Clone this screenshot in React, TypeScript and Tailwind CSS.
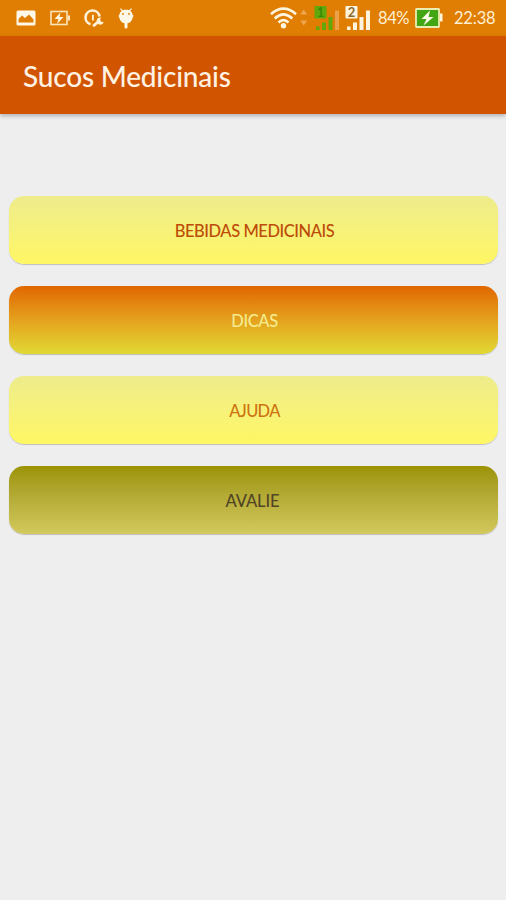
import clsx from "clsx";

const menu = [
  {
    label: "BEBIDAS MEDICINAIS",
    box: "from-[#eeec8c] to-[#fff763]",
    text: "text-[#bd4b08] tracking-[-0.45px]",
  },
  {
    label: "DICAS",
    box: "from-[#e06600] to-[#dfd934]",
    text: "text-[#f4ec8e] tracking-[-0.4px]",
  },
  {
    label: "AJUDA",
    box: "from-[#eeec8c] to-[#fff763]",
    text: "text-[#cd7411] tracking-[-0.7px]",
  },
  {
    label: "AVALIE",
    box: "from-[#9c9300] to-[#d3c95c]",
    text: "-ml-1 text-[#514525] tracking-[-0.1px]",
  },
];

function PictureIcon() {
  return (
    <svg width="20" height="16" viewBox="0 0 20 16">
      <rect x="0.5" y="0.5" width="19" height="15" rx="1.5" fill="#fff8e8" />
      <path d="M2.500 12.500V9l3.500-3.500 3 2.500L13 4.500l4.500 5v3z" fill="#df7e03" />
    </svg>
  );
}

function PowerIcon() {
  return (
    <svg width="20" height="16" viewBox="0 0 20 16">
      <rect x="1" y="1.5" width="16" height="13" fill="none" stroke="#fbe3b8" strokeWidth="1.6" />
      <path d="M17.5 5.5H20v5h-2.5z" fill="#fbe3b8" />
      <path d="M10.5 2.5L4.5 9h4l-1.5 5L13.5 7h-4z" fill="#fff8e8" />
    </svg>
  );
}

function GaugeIcon() {
  return (
    <svg width="20" height="18" viewBox="0 0 20 18">
      <path
        d="M6.500 15.200A7 7 0 1 1 15.500 7.500"
        fill="none"
        stroke="#fff2d8"
        strokeWidth="2.600"
      />
      <path d="M8 5.800h1.800v5.800H8z" fill="#fff2d8" />
      <path d="M10 16.300l4-3.300" stroke="#fff2d8" strokeWidth="2.800" strokeLinecap="round" />
      <path d="M16.800 8.500a3.600 3.600 0 1 0 2.900 4.500l-2.500-.2-1-1.700z" fill="#fff2d8" />
    </svg>
  );
}

function RobotIcon() {
  return (
    <svg width="16" height="21" viewBox="0 0 16 21">
      <path d="M2.500.7l2.700 3M13.500.7l-2.700 3" stroke="#fff8e8" strokeWidth="1.200" />
      <path
        d="M8 1.800c4 0 6.300 2.100 6.500 5 1 .3 1.200 1.700.3 2.400-.7 3.700-2.800 5.600-5.300 6V19a1.500 1.500 0 0 1-3 0v-3.800c-2.500-.4-4.600-2.300-5.300-6-.9-.7-.7-2.100.3-2.400.2-2.900 2.500-5 6.500-5z"
        fill="#fff8e8"
      />
      <circle cx="5" cy="6" r="0.900" fill="#df7e03" />
      <circle cx="11" cy="6" r="0.900" fill="#df7e03" />
    </svg>
  );
}

function WifiIcon() {
  return (
    <svg width="37" height="24" viewBox="0 0 37 24">
      <g fill="none" stroke="#fff5df" strokeWidth="2.700">
        <path d="M1 8.200Q13.500-2.800 26 8.200" />
        <path d="M4.700 12.500Q13.500 4.300 22.300 12.500" />
        <path d="M8.500 16.500Q13.500 11.800 18.500 16.500" />
      </g>
      <circle cx="13.500" cy="19.700" r="2.700" fill="#fff5df" />
      <path d="M30.300 8.500l3.400-5 3.400 5zM30.300 14.500l3.400 5 3.400-5z" fill="#efa650" />
    </svg>
  );
}

function SignalIcon({ sim, active }: { sim: string; active?: boolean }) {
  const color = active ? "#62a80c" : "#fff5df";
  return (
    <svg width="27" height="31" viewBox="0 -3 27 31">
      <rect x="0.500" y="0" width="12" height="12.500" rx="1" fill={color} />
      <text
        x="6.500"
        y="11"
        textAnchor="middle"
        fontFamily="Lato, sans-serif"
        fontSize="13"
        fontWeight="700"
        fill={active ? "#398b06" : "#8b682c"}
      >
        {sim}
      </text>
      <path d="M2 20.500H5.500V24H2zM8 16.500h4V24H8zM14.500 11h4v13h-4z" fill={color} />
      <path d="M21 4.500h4V24h-4z" fill={active ? "#eca047" : color} />
    </svg>
  );
}

function BatteryIcon() {
  return (
    <svg width="28" height="20" viewBox="0 0 28 20">
      <rect x="1" y="1" width="23" height="18" rx="0.500" fill="#42a514" stroke="#e9edb2" strokeWidth="1.800" />
      <path d="M25 5.500h2.500v8H25z" fill="#fff5df" />
      <path d="M15 2.500L6.500 11h5l-3 6.500L18.500 9h-5z" fill="#fffceb" />
    </svg>
  );
}

function StatusBar() {
  return (
    <div className="flex h-9 items-center bg-[#df7e03] pr-[11px] pl-4 text-[16.5px] text-[#fff0d5]">
      <div className="flex items-center gap-[14px]">
        <PictureIcon />
        <PowerIcon />
        <GaugeIcon />
        <RobotIcon />
      </div>
      <div className="ml-auto flex items-center">
        <WifiIcon />
        <div className="ml-[7px] flex gap-1">
          <SignalIcon sim="1" active />
          <SignalIcon sim="2" />
        </div>
        <span className="mt-px ml-[6px] w-[31px] whitespace-nowrap tracking-[-0.4px]">84%</span>
        <div className="ml-[6px]">
          <BatteryIcon />
        </div>
        <span className="mt-px ml-[11px] w-[41px] whitespace-nowrap tracking-[-0.2px]">22:38</span>
      </div>
    </div>
  );
}

export default function App() {
  return (
    <div className="flex h-[900px] w-[506px] flex-col overflow-hidden bg-[#eeeeee] font-['Lato',sans-serif]">
      <StatusBar />

      {/* App bar */}
      <header className="flex h-[78px] items-center bg-[#d15400] pt-px pl-[23px] shadow-[0_2px_4px_rgba(0,0,0,0.25)]">
        <h1 className="text-[28px] leading-none font-medium tracking-[-0.2px] whitespace-nowrap text-[#fff2e2]">
          Sucos Medicinais
        </h1>
      </header>

      {/* Menu */}
      <nav className="mt-[82px] flex flex-col gap-[22px] pr-2 pl-[9px]">
        {menu.map((item) => (
          <button
            key={item.label}
            className={clsx(
              "flex h-[68px] items-center justify-center rounded-[15px] bg-linear-to-b pt-0.5 pl-0.5 shadow-[0_1px_1px_rgba(0,0,0,0.2)]",
              item.box
            )}
          >
            <span className={clsx("text-[16.5px] leading-none font-medium", item.text)}>
              {item.label}
            </span>
          </button>
        ))}
      </nav>
    </div>
  );
}
